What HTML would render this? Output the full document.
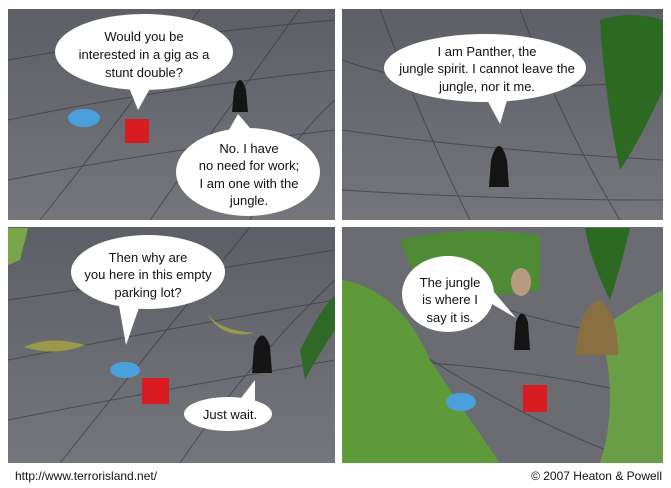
<!DOCTYPE html>
<html><head><meta charset="utf-8"><style>
html,body{margin:0;padding:0;background:#fff;width:671px;height:488px;overflow:hidden}
svg{display:block}
text{font-family:"Liberation Sans",sans-serif;font-size:13px;fill:#111;text-anchor:middle}
</style></head><body>
<svg width="671" height="488" viewBox="0 0 671 488">
<defs>
<linearGradient id="g1" x1="0" y1="0" x2="0" y2="1"><stop offset="0" stop-color="#5d5f66"/><stop offset="1" stop-color="#74767c"/></linearGradient>
<clipPath id="c1"><rect x="8" y="9" width="327" height="211"/></clipPath>
<clipPath id="c2"><rect x="342" y="9" width="321" height="211"/></clipPath>
<clipPath id="c3"><rect x="8" y="227" width="327" height="236"/></clipPath>
<clipPath id="c4"><rect x="342" y="227" width="321" height="236"/></clipPath>
</defs>
<rect x="8" y="9" width="327" height="211" fill="url(#g1)"/>
<rect x="342" y="9" width="321" height="211" fill="url(#g1)"/>
<rect x="8" y="227" width="327" height="236" fill="url(#g1)"/>
<rect x="342" y="227" width="321" height="236" fill="#6a6c72"/>
<g stroke="#3a3b40" stroke-width="1" fill="none" opacity="0.7">
<g clip-path="url(#c1)"><path d="M8 60 Q120 40 335 20 M8 120 Q150 90 335 70 M8 180 Q160 150 335 130 M40 220 Q120 120 200 9 M150 220 Q220 120 300 9 M250 220 Q280 150 335 100"/></g>
<g clip-path="url(#c2)"><path d="M342 60 Q450 100 663 80 M342 130 Q480 150 663 160 M380 9 Q420 120 470 220 M520 9 Q560 120 620 220 M342 190 Q500 200 663 200"/></g>
<g clip-path="url(#c3)"><path d="M8 300 Q150 280 335 250 M8 360 Q160 330 335 300 M8 420 Q160 390 335 360 M60 463 Q150 350 250 227 M180 463 Q250 360 335 280"/></g>
<g clip-path="url(#c4)"><path d="M342 360 Q500 360 663 400 M400 340 Q520 420 640 463 M480 300 Q560 330 663 340"/></g>
</g>
<ellipse cx="84" cy="118" rx="16" ry="9" fill="#4aa0dc"/>
<rect x="125" y="119" width="24" height="24" fill="#d81c22"/>
<path d="M232 112 L248 112 L246 90 Q240 70 234 90 Z" fill="#151515"/>
<path d="M489 187 L509 187 L507 160 Q499 132 491 160 Z" fill="#151515"/>
<path d="M600 20 Q630 10 663 20 L663 90 Q640 140 620 170 Q605 100 600 20 Z" fill="#2c6a22"/>
<path d="M24 347 Q50 335 85 345 Q55 357 24 347 Z" fill="#9a9a4a"/>
<path d="M205 310 Q215 330 255 333 Q220 340 205 310 Z" fill="#9a9a4a"/>
<ellipse cx="125" cy="370" rx="15" ry="8" fill="#4aa0dc"/>
<rect x="142" y="378" width="27" height="26" fill="#d81c22"/>
<path d="M252 373 L272 373 L270 346 Q262 325 254 346 Z" fill="#151515"/>
<path d="M300 350 Q320 310 335 295 L335 330 Q315 360 305 380 Z" fill="#2e6a26"/>
<path d="M8 228 L28 228 L20 260 L8 265 Z" fill="#7aa64a"/>
<path d="M342 280 Q400 290 430 360 Q470 420 500 463 L342 463 Z" fill="#5f9a3a"/>
<path d="M400 240 Q460 225 540 235 L540 290 Q480 300 420 290 Z" fill="#4f8a34"/>
<path d="M600 330 Q640 300 663 290 L663 463 L600 463 Q620 400 600 330 Z" fill="#6a9e46"/>
<path d="M585 228 L630 228 Q620 270 610 300 Q590 260 585 228 Z" fill="#2c6a22"/>
<ellipse cx="521" cy="282" rx="10" ry="14" fill="#b89a80"/>
<path d="M576 355 L618 355 Q618 310 598 300 Q578 310 576 355 Z" fill="#8a7040"/>
<path d="M514 350 L530 350 L528 322 Q522 305 516 322 Z" fill="#151515"/>
<ellipse cx="461" cy="402" rx="15" ry="9" fill="#4aa0dc"/>
<rect x="523" y="385" width="24" height="27" fill="#d81c22"/>
<g fill="#fff">
<ellipse cx="144" cy="52" rx="89" ry="38"/><path d="M128 85 L138 110 L152 85 Z"/>
<ellipse cx="248" cy="172" rx="72" ry="44"/><path d="M226 135 L238 114 L256 135 Z"/>
<ellipse cx="485" cy="68" rx="101" ry="34"/><path d="M486 98 L500 124 L508 97 Z"/>
<ellipse cx="148" cy="272" rx="77" ry="37"/><path d="M118 300 L126 345 L140 305 Z"/>
<ellipse cx="228" cy="414" rx="44" ry="17"/><path d="M238 402 L255 380 L255 405 Z"/>
<ellipse cx="448" cy="294" rx="46" ry="38"/><path d="M485 300 L516 318 L488 285 Z"/>
</g>
<text x="144" y="41">Would you be</text>
<text x="144" y="59">interested in a gig as a</text>
<text x="144" y="77">stunt double?</text>
<text x="249" y="153">No. I have</text>
<text x="249" y="170">no need for work;</text>
<text x="249" y="188">I am one with the</text>
<text x="249" y="205">jungle.</text>
<text x="487" y="56">I am Panther, the</text>
<text x="487" y="73">jungle spirit. I cannot leave the</text>
<text x="487" y="91">jungle, nor it me.</text>
<text x="148" y="262">Then why are</text>
<text x="148" y="279">you here in this empty</text>
<text x="148" y="297">parking lot?</text>
<text x="230" y="419">Just wait.</text>
<text x="450" y="287">The jungle</text>
<text x="450" y="304">is where I</text>
<text x="450" y="322">say it is.</text>
<text x="15" y="480" style="text-anchor:start;font-size:12px">http://www.terrorisland.net/</text>
<text x="662" y="480" style="text-anchor:end;font-size:12px">© 2007 Heaton &amp; Powell</text>
</svg>
</body></html>
